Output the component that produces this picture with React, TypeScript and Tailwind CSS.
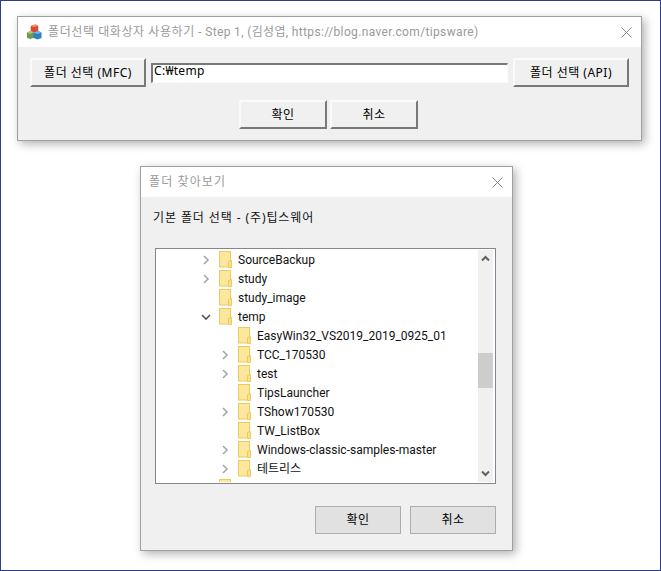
const FONT = "font-['Noto_Sans','Noto_Sans_CJK_KR',sans-serif]";
const TREE_FONT = "font-['Roboto','Noto_Sans_CJK_KR',sans-serif]";

type TreeRow = { label: string; level: 1 | 2; state?: "closed" | "open" };

const treeRows: TreeRow[] = [
  { label: "SourceBackup", level: 1, state: "closed" },
  { label: "study", level: 1, state: "closed" },
  { label: "study_image", level: 1 },
  { label: "temp", level: 1, state: "open" },
  { label: "EasyWin32_VS2019_2019_0925_01", level: 2 },
  { label: "TCC_170530", level: 2, state: "closed" },
  { label: "test", level: 2, state: "closed" },
  { label: "TipsLauncher", level: 2 },
  { label: "TShow170530", level: 2, state: "closed" },
  { label: "TW_ListBox", level: 2 },
  { label: "Windows-classic-samples-master", level: 2, state: "closed" },
  { label: "테트리스", level: 2, state: "closed" },
  { label: "", level: 1 },
];

function AppIcon() {
  return (
    <svg width="16" height="16" viewBox="0 0 17 17" className="shrink-0">
      <path d="M5 2 L10 0.5 L13 2 L13 8 L8 9 L5 7.5 Z" fill="#d9482f" />
      <path d="M5 2 L10 0.5 L13 2 L8 3.5 Z" fill="#ee8a70" />
      <path d="M1 9 L5 7.5 L8.5 9 L8.5 14.5 L4.5 16 L1 14.5 Z" fill="#6d9a45" />
      <path d="M1 9 L5 7.5 L8.5 9 L4.5 10.5 Z" fill="#a5c77d" />
      <path d="M8 9 L13 7.5 L16.5 9 L16.5 15 L12 16.5 L8 15 Z" fill="#2f7fc4" />
      <path d="M8 9 L13 7.5 L16.5 9 L12 10.5 Z" fill="#79b5e4" />
    </svg>
  );
}

function CloseIcon() {
  return (
    <svg width="11" height="11" viewBox="0 0 11 11" className="shrink-0">
      <path d="M0.5 0.5 L10.5 10.5 M10.5 0.5 L0.5 10.5" stroke="#8a8a8a" strokeWidth="1" fill="none" />
    </svg>
  );
}

function FolderIcon() {
  return (
    <svg width="13" height="17" viewBox="0 0 13 17" className="shrink-0">
      <rect x="0.5" y="0.5" width="11" height="15.5" fill="#fde79c" stroke="#eccb5c" />
      <path d="M9.5 16.5 L9.5 10.5 L12.5 9.5 L12.5 16.5 Z" fill="#fbe08a" stroke="#eccb5c" />
    </svg>
  );
}

function Chevron({ open }: { open: boolean }) {
  return (
    <svg width="10" height="10" viewBox="0 0 10 10" className="shrink-0">
      {open ? (
        <path d="M1 3 L5 7 L9 3" stroke="#555555" strokeWidth="1.6" fill="none" />
      ) : (
        <path d="M3 1 L7 5 L3 9" stroke="#a6a6a6" strokeWidth="1.6" fill="none" />
      )}
    </svg>
  );
}

function ClassicButton({ label, className }: { label: string; className: string }) {
  return (
    <button
      className={`h-[29px] border-t-2 border-l-2 border-r-2 border-b-2 border-t-[#fafafa] border-l-[#fafafa] border-r-[#787878] border-b-[#787878] bg-[#f0f0f0] text-[12px] tracking-[0.5px] text-black ${className}`}
    >
      {label}
    </button>
  );
}

function FlatButton({ label }: { label: string }) {
  return (
    <button className="h-[28px] w-[86px] border border-[#adadad] bg-[#e1e1e1] text-[12px] tracking-[0.5px] text-black">
      {label}
    </button>
  );
}

function TreeItem({ row }: { row: TreeRow }) {
  return (
    <div className={`flex h-[19px] items-center ${row.level === 1 ? "pl-[45px]" : "pl-[64px]"}`}>
      <span className="flex w-[18px] shrink-0 items-center">{row.state && <Chevron open={row.state === "open"} />}</span>
      <FolderIcon />
      <span className={`ml-[6px] whitespace-nowrap text-[12px] text-[#111111] ${TREE_FONT}`}>{row.label}</span>
    </div>
  );
}

function Scrollbar() {
  return (
    <div className="flex w-[15px] shrink-0 flex-col bg-[#f0f0f0]">
      <div className="flex h-[17px] shrink-0 items-center justify-center">
        <svg width="9" height="7" viewBox="0 0 9 7">
          <path d="M1 5.5 L4.5 2 L8 5.5" stroke="#606060" strokeWidth="2" fill="none" />
        </svg>
      </div>
      <div className="mt-[86px] h-[35px] shrink-0 bg-[#cdcdcd]" />
      <div className="flex-1" />
      <div className="flex h-[17px] shrink-0 items-center justify-center">
        <svg width="9" height="7" viewBox="0 0 9 7">
          <path d="M1 1.5 L4.5 5 L8 1.5" stroke="#606060" strokeWidth="2" fill="none" />
        </svg>
      </div>
    </div>
  );
}

export default function App() {
  return (
    <div className={`h-[571px] w-[661px] overflow-hidden border border-[#2e3d8b] bg-white ${FONT}`}>
      <section className="ml-[16px] mt-[15px] w-[625px] border border-[#a0a0a0] bg-[#f0f0f0] shadow-[3px_3px_9px_rgba(0,0,0,0.3)]">
        <header className="flex h-[30px] items-center bg-white pl-[8px] pr-[9px]">
          <AppIcon />
          <h1 className={`ml-[6px] flex-1 whitespace-nowrap text-[12px] font-normal tracking-[0.35px] text-[#9a9a9a] ${TREE_FONT}`}>
            <span className="tracking-[0.6px]">폴더선택 대화상자 사용하기</span> - Step 1, (김성엽, https://blog.naver.com/tipsware)
          </h1>
          <CloseIcon />
        </header>
        <div className="h-[93px] px-[12px] pt-[11px]">
          <div className="flex items-center gap-[5px]">
            <ClassicButton label="폴더 선택 (MFC)" className="w-[116px]" />
            <div className="flex h-[20px] flex-1 items-center border-t-2 border-l-2 border-r border-b border-t-[#787878] border-l-[#787878] border-r-[#fafafa] border-b-[#fafafa] bg-white pb-[4px] pl-[1px] text-[12px] tracking-[0.3px] text-black">
              C:₩temp
            </div>
            <ClassicButton label="폴더 선택 (API)" className="w-[116px]" />
          </div>
          <div className="mt-[13px] flex justify-center gap-[3px] pr-[2px]">
            <ClassicButton label="확인" className="w-[88px]" />
            <ClassicButton label="취소" className="w-[88px]" />
          </div>
        </div>
      </section>

      <section className="ml-[139px] mt-[25px] w-[373px] border border-[#a0a0a0] bg-[#f0f0f0] shadow-[3px_3px_9px_rgba(0,0,0,0.3)]">
        <header className="flex h-[30px] items-center justify-between bg-white pl-[8px] pr-[9px]">
          <h2 className="whitespace-nowrap text-[12px] font-normal tracking-[1.1px] text-[#9a9a9a]">폴더 찾아보기</h2>
          <CloseIcon />
        </header>
        <div className="pl-[14px] pr-[16px]">
          <p className="-ml-[2px] pt-[12px] text-[12px] leading-[18px] tracking-[0.9px] text-[#111111]">기본 폴더 선택 - (주)팁스웨어</p>
          <div className="mt-[21px] flex h-[236px] border border-[#82878f] bg-white pr-[2px] pt-[1px] pb-[1px]">
            <div className="min-w-0 flex-1 overflow-hidden">
              {treeRows.map((row) => (
                <TreeItem key={row.label || "cut-off"} row={row} />
              ))}
            </div>
            <Scrollbar />
          </div>
          <div className="flex justify-end gap-[9px] pt-[22px] pb-[16px]">
            <FlatButton label="확인" />
            <FlatButton label="취소" />
          </div>
        </div>
      </section>
    </div>
  );
}
